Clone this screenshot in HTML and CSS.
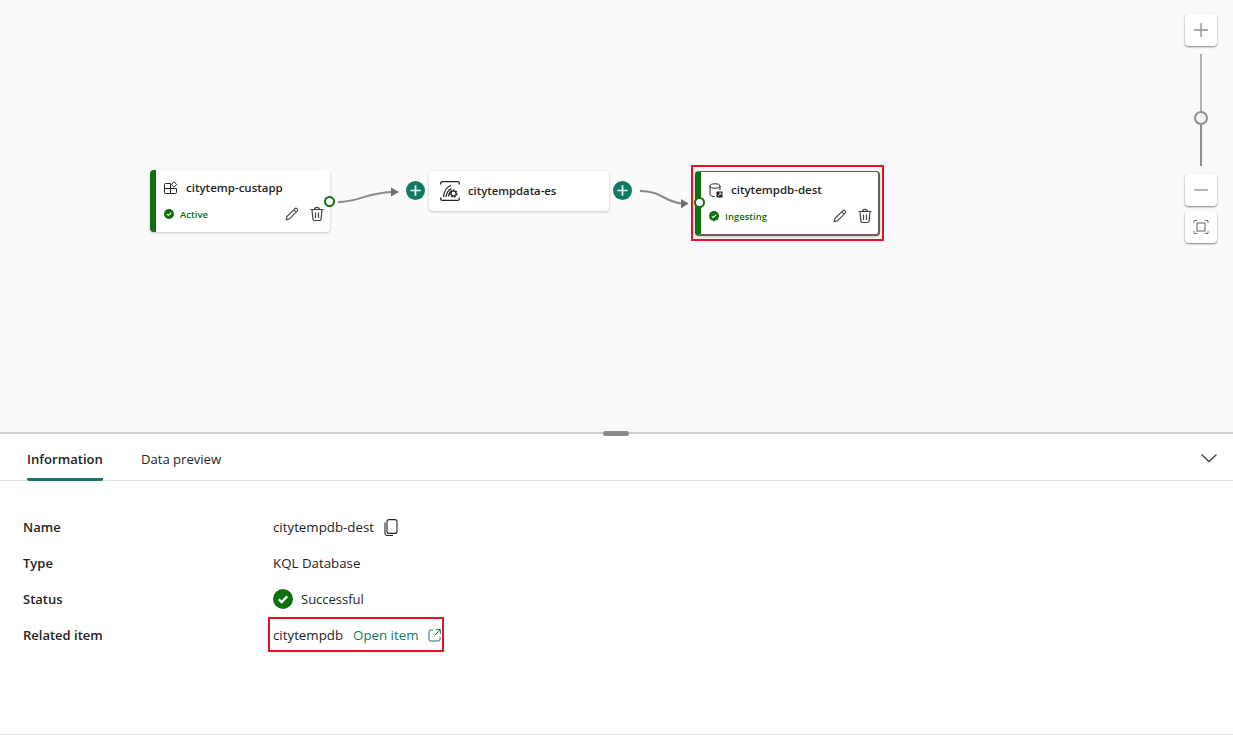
FILE: index.html
```html
<!DOCTYPE html>
<html lang="en">
<head>
  <meta charset="UTF-8">
  <meta name="viewport" content="width=device-width, initial-scale=1.0">
  <link rel="stylesheet" href="styles.css">
  <title>Eventstream</title>
</head>
<body>
  <svg width="0" height="0" class="defs">
    <defs>
      <symbol id="pencil" viewBox="0 0 16 16">
        <path d="M2.2 13.8l.9-3.4 7.6-7.6a1.6 1.6 0 0 1 2.4 2.4l-7.600 7.600z M9.8 3.800l2.400 2.400" fill="none" stroke="currentColor" stroke-width="1.1"/>
      </symbol>
      <symbol id="trash" viewBox="0 0 16 16">
        <path d="M1.5 3.5h13 M5.5 3.5a2.5 2.200 0 0 1 5 0 M3 3.5l.9 9.600a1.800 1.800 0 0 0 1.800 1.400h4.600a1.800 1.800 0 0 0 1.800-1.400l.9-9.600 M6.5 6.5v5.500 M9.5 6.5v5.500" fill="none" stroke="currentColor" stroke-width="1.2"/>
      </symbol>
      <symbol id="check" viewBox="0 0 16 16">
        <circle cx="8" cy="8" r="8" fill="#0e700e"/>
        <path d="M4.600 8.300l2.300 2.200 4.500-4.600" fill="none" stroke="#fff" stroke-width="1.8"/>
      </symbol>
      <symbol id="plus" viewBox="0 0 20 20">
        <circle cx="10" cy="10" r="10" fill="#117865"/>
        <path d="M10 4.500v11 M4.500 10h11" stroke="#e8f4f1" stroke-width="1.8"/>
      </symbol>
    </defs>
  </svg>

  <div class="canvas">
    <svg class="wires" width="1233" height="432" viewBox="0 0 1233 432">
      <path d="M338 202c20 0 28-9 54-10" fill="none" stroke="#8a8a8a" stroke-width="2"/>
      <path d="M391 187.500l8 4.500-8 4.500z" fill="#6e6e6e"/>
      <path d="M640 191c22 0 24 11 42 12.500" fill="none" stroke="#8a8a8a" stroke-width="2"/>
      <path d="M681 199l7.500 4.500-7.500 5z" fill="#6e6e6e"/>
    </svg>

    <div class="node node-source">
      <div class="node-head">
        <svg class="node-icon" width="14" height="14" viewBox="0 0 14 14">
          <path d="M1.500 2.500h5v10h-5a1 1 0 0 1-1-1v-8a1 1 0 0 1 1-1z M.5 7.500h12 M6.500 7.500v5h5a1 1 0 0 0 1-1v-4 M10 .8l2.700 2.700-2.700 2.700-2.700-2.700z" fill="none" stroke="#242424"/>
        </svg>
        <span class="node-name">citytemp-custapp</span>
      </div>
      <div class="node-foot">
        <svg class="status-icon" width="10" height="10"><use href="#check"/></svg>
        <span class="node-status">Active</span>
        <svg class="tool tool-edit" width="16" height="16"><use href="#pencil"/></svg>
        <svg class="tool" width="16" height="16"><use href="#trash"/></svg>
      </div>
      <span class="port port-right"></span>
    </div>

    <svg class="add add-left" width="19" height="19"><use href="#plus"/></svg>

    <div class="node node-stream">
      <svg class="node-icon" width="20" height="20" viewBox="0 0 20 20">
        <path d="M.7 3.500V2A1.500 1.500 0 0 1 2.200.7h15.600A1.500 1.500 0 0 1 19.300 2v1.500 M.7 16.500V18a1.500 1.500 0 0 0 1.500 1.300h15.600a1.500 1.500 0 0 0 1.500-1.300v-1.500" fill="none" stroke="#242424" stroke-width="1.3"/>
        <path d="M3.500 16c.6-5 2.500-10 7.500-11.500 M6 16c.5-3.800 2-7 5.500-8.500 M8.500 15.500c.2-2.500 1-4.500 3-5.500" fill="none" stroke="#242424" stroke-width="1.2"/>
        <circle cx="13.500" cy="12.500" r="3" fill="none" stroke="#242424" stroke-width="2.2" stroke-dasharray="1.800 .8"/>
        <circle cx="13.500" cy="12.500" r="2.600" fill="none" stroke="#242424" stroke-width="1"/>
      </svg>
      <span class="node-name">citytempdata-es</span>
    </div>

    <svg class="add add-right" width="19" height="19"><use href="#plus"/></svg>

    <div class="highlight highlight-node"></div>
    <div class="node node-dest">
      <div class="node-head">
        <svg class="node-icon" width="14" height="15" viewBox="0 0 14 15">
          <ellipse cx="6" cy="3" rx="5" ry="2.200" fill="none" stroke="#242424"/>
          <path d="M1 3v8.500c0 1.200 2 2 4.500 2 M11 3v4" fill="none" stroke="#242424"/>
          <path d="M7.500 8.500h6v6h-6z" fill="#242424"/>
          <path d="M9 13l3-3 M10 10h2v2" fill="none" stroke="#fff" stroke-width=".8"/>
        </svg>
        <span class="node-name">citytempdb-dest</span>
      </div>
      <div class="node-foot">
        <svg class="status-icon" width="10" height="10"><use href="#check"/></svg>
        <span class="node-status">Ingesting</span>
        <svg class="tool tool-edit" width="16" height="16"><use href="#pencil"/></svg>
        <svg class="tool" width="16" height="16"><use href="#trash"/></svg>
      </div>
      <span class="port port-left"></span>
    </div>

    <div class="zoom-bar">
      <button class="zoom-btn" type="button">
        <svg width="16" height="16" viewBox="0 0 16 16"><path d="M8 1v14 M1 8h14" stroke="#8f8f8f" stroke-width="1.3"/></svg>
      </button>
      <div class="zoom-track">
        <span class="zoom-upper"></span>
        <span class="zoom-thumb"></span>
        <span class="zoom-lower"></span>
      </div>
      <button class="zoom-btn" type="button">
        <svg width="16" height="16" viewBox="0 0 16 16"><path d="M1 8h14" stroke="#8f8f8f" stroke-width="1.3"/></svg>
      </button>
      <button class="zoom-btn zoom-fit" type="button">
        <svg width="16" height="16" viewBox="0 0 16 16">
          <path d="M1 4V1.500h3 M12 1.500h3V4 M15 12v2.500h-3 M4 14.500H1V12" fill="none" stroke="#6e6e6e"/>
          <rect x="4" y="4" width="8" height="8" fill="none" stroke="#7a7a7a" stroke-width="1.2"/>
        </svg>
      </button>
    </div>
  </div>

  <div class="panel">
    <span class="splitter-handle"></span>
    <div class="tabs">
      <span class="tab tab-active">Information</span>
      <span class="tab">Data preview</span>
      <svg class="collapse" width="18" height="10" viewBox="0 0 18 10"><path d="M1.500 1.500L9 8.500l7.500-7" fill="none" stroke="#424242" stroke-width="1.3"/></svg>
    </div>
    <div class="details">
      <div class="detail-label">Name</div>
      <div class="detail-value">citytempdb-dest
        <svg class="copy" width="14" height="17" viewBox="0 0 14 17">
          <rect x="3" y=".6" width="10" height="13.800" rx="2" fill="none" stroke="#242424" stroke-width="1.1"/>
          <path d="M1 3.500v10.500a2.500 2.500 0 0 0 2.500 2.500H9" fill="none" stroke="#242424" stroke-width="1.1"/>
        </svg>
      </div>
      <div class="detail-label">Type</div>
      <div class="detail-value">KQL Database</div>
      <div class="detail-label">Status</div>
      <div class="detail-value status-value">
        <svg class="status-big" width="20" height="20"><use href="#check"/></svg>
        Successful
      </div>
      <div class="detail-label">Related item</div>
      <div class="detail-value related">
        citytempdb
        <a class="open-link" href="#">Open item
          <svg width="13" height="13" viewBox="0 0 13 13"><path d="M5 1H2.500A1.500 1.500 0 0 0 1 2.500v8A1.500 1.500 0 0 0 2.500 12h8a1.500 1.500 0 0 0 1.500-1.500V8 M8 .6h4.400V5 M12.200.8L6.500 6.500" fill="none" stroke="#117865"/></svg>
        </a>
      </div>
    </div>
  </div>
</body>
</html>
```

FILE: styles.css
```css
html, body {
  margin: 0;
  height: 100%;
}
body {
  width: 1233px;
  height: 735px;
  overflow: hidden;
  font-family: "Open Sans", "Noto Sans", sans-serif;
  color: #242424;
  background-color: #ffffff;
}
.defs {
  position: absolute;
}

/* diagram canvas */
.canvas {
  position: relative;
  height: 432px;
  background-color: #fafafa;
}
.wires {
  position: absolute;
  left: 0;
  top: 0;
}
.node {
  position: absolute;
  box-sizing: border-box;
  background-color: #ffffff;
  border-radius: 4px;
  box-shadow: 0 1px 3px rgba(0, 0, 0, 0.22);
}
.node-source, .node-dest {
  display: flex;
  flex-direction: column;
  border-left: 6px solid #0e700e;
}
.node-source {
  left: 150px;
  top: 170px;
  width: 180px;
  height: 62px;
  padding: 9px 5px 0 8px;
}
.node-stream {
  left: 429px;
  top: 171px;
  width: 180px;
  height: 40px;
  display: flex;
  align-items: center;
  gap: 8px;
  padding-left: 11px;
}
.node-stream .node-name {
  font-size: 11.3px;
}
.node-dest {
  left: 695px;
  top: 171px;
  width: 185px;
  height: 65px;
  padding: 9px 5px 0 8px;
  border-top: 1px solid #616161;
  border-right: 2px solid #616161;
  border-bottom: 2px solid #616161;
}
.node-head {
  display: flex;
  align-items: center;
  gap: 8px;
  height: 18px;
}
.node-foot {
  display: flex;
  align-items: center;
  margin-top: 8px;
  height: 18px;
}
.node-name {
  font-size: 11.5px;
  font-weight: 600;
  line-height: 18px;
}
.node-icon {
  flex: none;
}
.status-icon {
  margin-right: 6px;
}
.node-status {
  font-size: 9.5px;
  font-weight: 600;
  color: #0e700e;
}
.tool {
  color: #424242;
  margin-left: 9px;
}
.tool-edit {
  margin-left: auto;
}
.port {
  position: absolute;
  box-sizing: border-box;
  width: 11px;
  height: 11px;
  border: 2.5px solid #0e700e;
  border-radius: 50%;
  background-color: #ffffff;
}
.port-right {
  right: -5px;
  top: 26px;
}
.port-left {
  left: -7px;
  top: 25px;
}
.add {
  position: absolute;
  top: 181px;
}
.add-left {
  left: 406px;
}
.add-right {
  left: 613px;
}
.highlight {
  box-sizing: border-box;
  border: 2px solid #e81123;
}
.highlight-node {
  position: absolute;
  left: 691px;
  top: 165px;
  width: 193px;
  height: 76px;
}

/* zoom controls */
.zoom-bar {
  position: absolute;
  left: 1185px;
  top: 14px;
  display: flex;
  flex-direction: column;
  align-items: center;
  width: 32px;
}
.zoom-btn {
  box-sizing: border-box;
  display: flex;
  align-items: center;
  justify-content: center;
  width: 32px;
  height: 32px;
  padding: 0;
  border: none;
  border-radius: 4px;
  background-color: #ffffff;
  box-shadow: 0 1px 2px rgba(0, 0, 0, 0.5);
}
.zoom-fit {
  margin-top: 5px;
}
.zoom-track {
  display: flex;
  flex-direction: column;
  align-items: center;
  height: 112px;
  margin: 8px 0;
}
.zoom-upper {
  width: 2px;
  height: 57px;
  background-color: #b3b3b3;
}
.zoom-thumb {
  flex: none;
  box-sizing: border-box;
  width: 14px;
  height: 14px;
  border: 2px solid #8f8f8f;
  border-radius: 50%;
  background-color: #f5f5f5;
}
.zoom-lower {
  width: 2px;
  height: 41px;
  background-color: #8f8f8f;
}

/* details panel */
.panel {
  position: relative;
  box-sizing: border-box;
  height: 303px;
  border-top: 2px solid #d1d1d1;
  border-bottom: 1px solid #e0e0e0;
}
.splitter-handle {
  position: absolute;
  left: 603px;
  top: -3px;
  width: 26px;
  height: 5px;
  border-radius: 3px;
  background-color: #8a8a8a;
}
.tabs {
  display: flex;
  align-items: stretch;
  gap: 38px;
  box-sizing: border-box;
  height: 47px;
  padding: 0 15px 0 27px;
  border-bottom: 1px solid #e0e0e0;
}
.tab {
  font-size: 13.1px;
  line-height: 50px;
  margin-bottom: -1px;
}
.tab-active {
  font-weight: 600;
  box-sizing: border-box;
  height: 47px;
  border-bottom: 3px solid #117865;
  border-radius: 0 0 2px 2px;
}
.collapse {
  align-self: center;
  margin-left: auto;
  margin-top: 2px;
}
.details {
  display: grid;
  grid-template-columns: 250px 1fr;
  grid-auto-rows: 36px;
  padding: 28px 0 0 23px;
  font-size: 13px;
}
.detail-label {
  display: flex;
  align-items: center;
  font-weight: 600;
}
.detail-value {
  display: flex;
  align-items: center;
  gap: 9px;
  font-size: 13.3px;
}
.status-value {
  font-size: 13px;
  gap: 8px;
}
.copy {
  margin-left: 1px;
}
.related {
  position: relative;
  gap: 10px;
}
.related::after {
  content: "";
  position: absolute;
  left: -5px;
  top: 0;
  width: 176px;
  height: 35px;
  box-sizing: border-box;
  border: 2px solid #e81123;
}
.open-link {
  display: flex;
  align-items: center;
  gap: 9px;
  color: #117865;
  text-decoration: none;
}
```
